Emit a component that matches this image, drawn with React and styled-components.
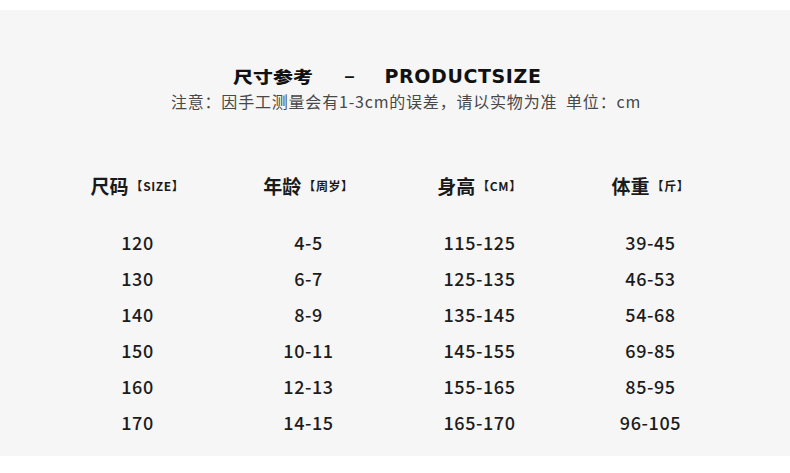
import styled, { createGlobalStyle } from 'styled-components';

// 尺码表：标题 + 说明 + 四列数据

const HEADERS = [
  { label: '尺码', unit: '【SIZE】' },
  { label: '年龄', unit: '【周岁】' },
  { label: '身高', unit: '【CM】' },
  { label: '体重', unit: '【斤】' },
];

const ROWS = [
  ['120', '4-5', '115-125', '39-45'],
  ['130', '6-7', '125-135', '46-53'],
  ['140', '8-9', '135-145', '54-68'],
  ['150', '10-11', '145-155', '69-85'],
  ['160', '12-13', '155-165', '85-95'],
  ['170', '14-15', '165-170', '96-105'],
];

const Global = createGlobalStyle`
  body {
    margin: 0;
    background: #fff;
    font-family: 'Noto Sans CJK SC', 'Noto Sans', sans-serif;
  }
`;

const Page = styled.div`
  width: 790px;
  height: 473px;
  padding-top: 10px;
  box-sizing: border-box;
`;

const Panel = styled.section`
  background: #f6f6f6;
  height: 446px;
  padding-top: 54px;
  box-sizing: border-box;
  display: flex;
  flex-direction: column;
  align-items: center;
`;

const Title = styled.h1`
  margin: 0 0 0 -14px;
  display: flex;
  align-items: center;
  height: 24px;
  line-height: 24px;
  color: #111;
`;

const TitleCn = styled.span`
  font-family: 'Noto Sans CJK SC', sans-serif;
  font-weight: 900;
  font-size: 19px;
  transform: scale(1.05, 0.82);
`;

const Dash = styled.span`
  font-family: 'Liberation Sans', sans-serif;
  font-weight: 700;
  font-size: 18px;
  margin: 0 30px 0 34px;
`;

const TitleEn = styled.span`
  font-family: 'DejaVu Sans', 'Liberation Sans', sans-serif;
  font-weight: 700;
  font-size: 19px;
  letter-spacing: 0.6px;
`;

const Note = styled.p`
  margin: 3px 0 0 22px;
  font-size: 16px;
  line-height: 20px;
  color: #484848;
  letter-spacing: 0.8px;
  white-space: pre;
`;

const Table = styled.div`
  margin-top: 62px;
  display: grid;
  grid-template-columns: repeat(4, 171px);
  grid-template-rows: 51px repeat(6, 36px);
  margin-left: -2px;
`;

const HeadCell = styled.div`
  align-self: start;
  display: flex;
  align-items: center;
  justify-content: center;
  height: 24px;
  color: #1a1a1a;
`;

const HeadLabel = styled.span`
  font-size: 19px;
  font-weight: 700;
`;

const HeadUnit = styled.span`
  font-size: 12px;
  font-weight: 700;
  margin-left: 2px;
  letter-spacing: 0.6px;
`;

const Cell = styled.div`
  display: flex;
  align-items: center;
  justify-content: center;
  font-size: 18px;
  font-weight: 500;
  color: #1c1c1c;
  letter-spacing: 0.6px;
`;

export default function App() {
  return (
    <>
      <Global />
      <Page>
        <Panel>
          <Title>
            <TitleCn>尺寸参考</TitleCn>
            <Dash>–</Dash>
            <TitleEn>PRODUCTSIZE</TitleEn>
          </Title>
          <Note>注意：因手工测量会有1-3cm的误差，请以实物为准  单位：cm</Note>
          <Table>
            {HEADERS.map((h) => (
              <HeadCell key={h.label}>
                <HeadLabel>{h.label}</HeadLabel>
                <HeadUnit>{h.unit}</HeadUnit>
              </HeadCell>
            ))}
            {ROWS.map((row) =>
              row.map((v, i) => <Cell key={row[0] + i}>{v}</Cell>)
            )}
          </Table>
        </Panel>
      </Page>
    </>
  );
}
